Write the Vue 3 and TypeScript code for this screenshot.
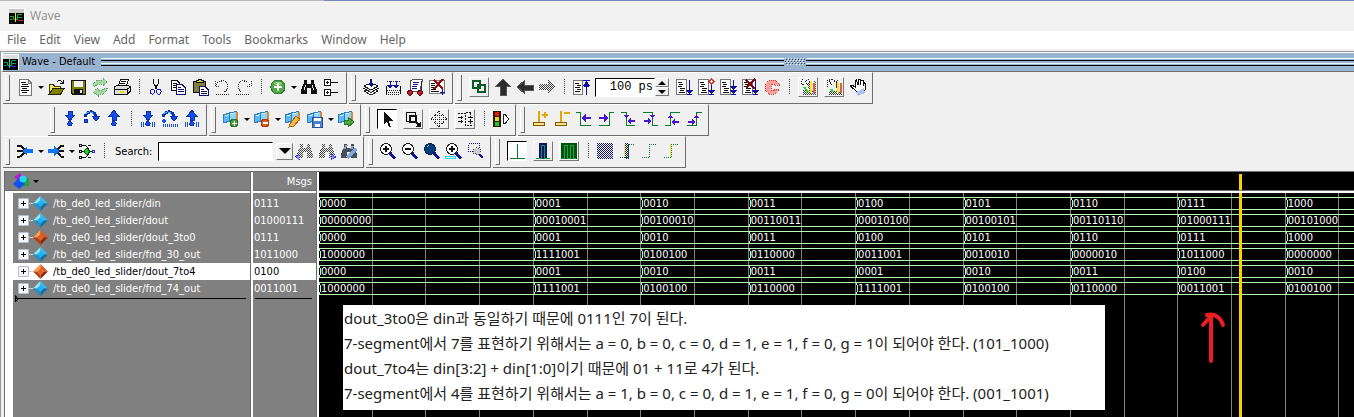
<script setup lang="ts">
import { ref } from 'vue'

type Layer = { d: string; f?: string; s?: string; w?: number; dash?: string }
type Item = { icon?: string; label?: string; kind?: 'plain' | 'raised' | 'pressed' | 'drop' | 'sep' | 'search' | 'time' }

const NAVY = '#10109a'
const GREEN = '#0a7a2c'
const BLUE = '#1450e6'
const VIOLET = '#4b12d0'

const sheet: Layer[] = [
  { d: 'M2.5 2.5H12.5V17.5H2.5Z', f: '#fff', s: '#777' },
  { d: 'M4 5.5H8M5 7.5H9M4 9.5H8M6 11.5H11M6 13.5H10M5 15.5H11', s: '#111' },
]
const flags: Layer[] = [
  { d: 'M2 6L9 4V12L2 14Z', f: '#5db9f3', s: '#2d7fc0' },
  { d: 'M8 4L15 2.5V10L9 12Z', f: '#8bd6ff', s: '#2d7fc0' },
  { d: 'M4 7L8 5.5M10 5L13 4', s: '#e3f7ff', w: 1 },
  { d: 'M16 3V12', s: '#d8853b', w: 2 },
]
const lens: Layer[] = [
  { d: 'M12 12L17 17.5', s: NAVY, w: 3 },
  { d: 'M8 2.5A5.5 5.5 0 1 1 7.9 2.5Z', f: '#fff', s: '#222', w: 1 },
]
const down: Layer = { d: 'M8 2H12V6H15L10 11.5L5 6H8Z', f: BLUE, s: '#0b2fb5' }
const up: Layer = { d: 'M10 1.5L15 7H12V11H8V7H5Z', f: BLUE, s: '#0b2fb5' }
const over: Layer[] = [
  { d: 'M3 8C4 3 10 1 13 5L14.5 8', s: '#0b2fb5', w: 3 },
  { d: 'M10 7H18L14 12Z', f: BLUE, s: '#0b2fb5' },
  { d: 'M3.5 5C6 2 10 2 12 6', s: '#58a6ff' },
]
const ticks: Layer = { d: 'M3.5 13V18M5.5 13V18M14.5 13V18M16.5 13V18', s: BLUE }
const dot: Layer = { d: 'M10 12.5A2.2 2.2 0 1 1 9.9 12.5Z', f: BLUE, s: '#0b2fb5' }
const binoc = 'M5 3H8V7H12V3H15V6L18 13V17H12V11H8V17H2V13L5 6Z'

const icons: Record<string, Layer[]> = {
  doc: [{ d: 'M4.5 2.5H13L16.5 6V18.5H4.5Z', f: '#fff', s: '#777' }, { d: 'M13 2V6H17', s: '#777' }, { d: 'M6 5.5H11M7 7.5H13M6 9.5H14M7 11.5H12M6 13.5H14M7 15.5H12', s: '#111' }],
  open: [{ d: 'M3.5 16V7.5H7L8.5 9H14.5V12', f: '#ffe56b', s: '#3d3d00' }, { d: 'M3 17.5L7 11.5H18L14.5 17.5Z', f: '#808000', s: '#222200' }, { d: 'M11 5C13 2 15 3 17 6M17 3V6.5H14', s: '#111' }],
  save: [{ d: 'M3.5 3.5H17.5V17.5H5L3.5 16Z', f: '#808000', s: '#111' }, { d: 'M6 4H15V10H6Z', f: '#f0f0f0' }, { d: 'M6 12H15V17H6Z', f: '#111' }, { d: 'M12 13H14V16H12Z', f: '#eee' }],
  refresh: [{ d: 'M3 9V7L7 3H13V1L17 5L13 9V7H8L5 9Z', f: '#a4d6a6', s: '#5fa866', dash: '1 1' }, { d: 'M17 11V13L13 17H8V19L3 15L8 11V13H12L15 11Z', f: '#a4d6a6', s: '#5fa866', dash: '1 1' }],
  print: [{ d: 'M6.5 9L8.5 2.5H16.5L14.5 9Z', f: '#fff', s: '#111' }, { d: 'M9 4.5H14M8 6.5H13', s: '#111' }, { d: 'M2.5 10L5 8.5H16L18.5 10V14L15 17.5H2.5Z', f: '#ddd', s: '#111' }, { d: 'M3 12.5H15L18 10M15 13V17', s: '#111' }, { d: 'M8 14H12V16H8Z', f: '#e5dc00' }],
  cut: [{ d: 'M7.5 2V6L11 12M12.5 2V6L9 12', s: '#111' }, { d: 'M6.5 12A2.2 2.6 0 1 1 6.4 12ZM13 12A2.2 2.6 0 1 1 12.9 12Z', s: '#1717d8', w: 1 }],
  copy: [{ d: 'M3.5 3.5H9L11.5 6V13.5H3.5Z', f: '#fff', s: '#111' }, { d: 'M5 6.5H9M5 8.5H10M5 10.5H8', s: '#111' }, { d: 'M8.5 7.5H14L17.5 11V17.5H8.5Z', f: '#fff', s: '#10106e' }, { d: 'M10 10.5H13M10 12.5H16M10 14.5H16', s: '#10106e' }],
  paste: [{ d: 'M3.5 4.5H15.5V15.5H3.5Z', f: '#80803c', s: '#111' }, { d: 'M6.5 5.5V3.5H8L9 2H11L12 3.5H13V5.5Z', f: '#d8d05a', s: '#111' }, { d: 'M9.5 9.5H15L18.5 13V18.5H9.5Z', f: '#fff', s: '#10106e' }, { d: 'M11 12.5H14M11 14.5H17M11 16.5H17', s: '#10106e' }],
  undo: [{ d: 'M3 4V9H8M4 8C8 2 15 3 16 8C16 12 14 14 12 15M4 17.5H18', s: '#333', dash: '1 1' }],
  redo: [{ d: 'M17 4V9H12M16 8C12 2 5 3 4 8C4 12 6 14 8 15M2 17.5H16', s: '#333', dash: '1 1' }],
  add: [{ d: 'M10 3A7 7 0 1 1 9.9 3Z', f: '#54a64a', s: '#2f7f2d' }, { d: 'M6 6A6 6 0 0 1 14 6L13 8H7Z', f: '#92cf82' }, { d: 'M10 6V14M6 10H14', s: '#fff', w: 2 }],
  find: [{ d: binoc, f: '#111' }, { d: 'M6.5 8L5.5 13M13.5 8L14.5 13', s: '#ddd' }],
  tree: [{ d: 'M3.5 2.5H9.5V8.5H3.5ZM3.5 12.5H9.5V18.5H3.5Z', f: '#fff', s: '#111' }, { d: 'M6.5 4V7M5 5.5H8M6.5 14V17M5 15.5H8M10 5.5H17M10 15.5H17', s: '#111' }],
  compile: [{ d: 'M3 14L10 11L17 14L10 18Z', f: '#fff', s: '#222' }, { d: 'M3 11.5L10 9L17 11.5L10 15.5Z', f: '#ddd', s: '#222' }, { d: 'M3 9L10 6L17 9L10 13Z', f: '#fff', s: '#222' }, { d: 'M10 2V8', s: NAVY, w: 2 }, { d: 'M7 7H13L10 10Z', f: NAVY }],
  compileAll: [{ d: 'M3 9V17M17 9V17', s: '#111' }, { d: 'M4 4.5H17M4 13.5H17M5 15.5H17M3 17.5H17', s: '#222', dash: '1 1' }, { d: 'M7 4V9M13 4V9', s: NAVY, w: 1 }, { d: 'M4 8H10L7 12ZM10 8H16L13 12Z', f: NAVY }],
  simulate: [{ d: 'M5.5 4L8 2.5H17.5L15 14H5Z', f: '#fff', s: '#555' }, { d: 'M8 5.5H14M8 7.5H13M7 9.5H12M7 11.5H12', s: NAVY }, { d: 'M16 4C19 10 15 13 16 17', s: '#222' }, { d: 'M4 13H6L8 15L6 18H4L2 16ZM14 13H16L18 15L16 18H14L12 16Z', f: '#c91a2c', s: '#5e0712' }],
  stopSim: [{ d: 'M2.5 3.5H17.5V16.5H2.5Z', f: '#fff', s: '#777' }, { d: 'M4 6.5H8M4 8.5H8M4 10.5H9M4 12.5H9M4 14.5H12', s: '#111' }, { d: 'M7 3L16 12M16 2L7 12', s: '#8b0d0d', w: 2 }, { d: 'M15.5 12V18M13 15.5H18', s: NAVY }],
  chain: [{ d: 'M4 4H11V11H4ZM9 8H16V15H9Z', s: '#0b5a28', w: 2 }],
  upBlack: [{ d: 'M10 2L17 9H13V18H7V9H3Z', f: '#2b2b2b', s: '#555' }],
  leftBlack: [{ d: 'M2 10L9 4V8H18V13H9V16Z', f: '#2b2b2b', s: '#555' }],
  rightGray: [{ d: 'M2 7H11V3L18 10L11 16V13H2Z', f: 'url(#dither-black)' }],
  restart: [{ d: 'M2.5 3.5H11.5V17.5H2.5Z', f: '#fff', s: '#777' }, { d: 'M4 6.5H8M6 8.5H10M4 10.5H9M6 12.5H10M4 14.5H9', s: '#111' }, { d: 'M12 3.5H19M13 9.5H18M15.5 4V18', s: NAVY }, { d: 'M12 9L15.5 4L19 9Z', f: NAVY }],
  run: [...sheet, { d: 'M15.5 3V15M13 17.5H18', s: NAVY }, { d: 'M12 13H19L15.5 17Z', f: NAVY }],
  runAll: [...sheet, { d: 'M15.5 7V15M13 17.5H18', s: NAVY }, { d: 'M12 13H19L15.5 17Z', f: NAVY }, { d: 'M15.5 2L18 4.5L15.5 7L13 4.5Z', f: '#fff', s: '#e02a20' }],
  runNext: [...sheet, { d: 'M15.5 3V15M13 17.5H18', s: NAVY }, { d: 'M12 9H19L15.5 13ZM12 13H19L15.5 17Z', f: NAVY }],
  breakSim: [...sheet, { d: 'M15.5 3V15M13 17.5H18', s: NAVY }, { d: 'M12 13H19L15.5 17Z', f: NAVY }, { d: 'M6 3L15 12M15 2L6 11', s: '#7b0c0c', w: 2 }],
  stop: [{ d: 'M7 3H13L17 7V8H12V7H9V13H12V12H17V13L13 17H7L3 13V7Z', f: '#f3a39c', s: '#e0392e', dash: '1 1' }],
  profile: [{ d: 'M3 5C3 2 7 2 8 5C9 2 12 2 12 6M3 6L6 8M8 6L11 9', s: '#222', dash: '1 1' }, { d: 'M5 13H18V18H5ZM10 5H13V12H10ZM16 4H18V12H16Z', f: 'url(#dither-black)' }, { d: 'M6 10L10 15', s: '#29d92e', w: 2 }, { d: 'M12 5H14V16H12Z', f: '#f5e71a' }, { d: 'M15 6H17V16H15Z', f: '#ee5348' }],
  memory: [{ d: 'M3 10V4L8 2L12 5V10M5 4L9 9', s: '#222', dash: '1 1' }, { d: 'M5 14H18V18H5ZM12 3H14V12H12Z', f: 'url(#dither-black)' }, { d: 'M7 12L9 15', s: '#29d92e', w: 2 }, { d: 'M13 5H15V16H13Z', f: '#f5e71a' }, { d: 'M16 6H18V16H16Z', f: '#ee5348' }],
  hand: [{ d: 'M8 14L2.5 9L4 8L7 10V4L8.5 3L10 8V2.5H12V8L13 3H15V9L16.5 6L17.5 7V12L15 16H9Z', f: '#fff', s: '#111' }, { d: 'M8 15L16 11L17 16L10 19Z', f: '#aac3ee' }],
  into: [down, dot], over: [...over, { d: 'M4 10A2 2 0 1 1 3.9 10Z', f: BLUE, s: '#0b2fb5' }], out: [up, dot],
  intoC: [down, dot, ticks], overC: [...over, { d: 'M4 10A2 2 0 1 1 3.9 10Z', f: BLUE }, { d: 'M3 16.5H18', s: BLUE, w: 3, dash: '1 1' }], outC: [up, dot, ticks],
  flagAdd: [...flags, { d: 'M13 10A4 4 0 1 1 12.9 10Z', f: '#4c9e3c', s: '#2d6f24' }, { d: 'M13 11.5V16.5M10.5 14H15.5', s: '#fff' }],
  flagDel: [...flags, { d: 'M13 10A4 4 0 1 1 12.9 10Z', f: '#e4561a', s: '#a83b0c' }, { d: 'M10.5 14H15.5', s: '#fff', w: 2 }],
  flagEdit: [...flags, { d: 'M7 15L13 7L17 10L11 17L6 18Z', f: '#f4b847', s: '#a8640f' }],
  flagSave: [...flags, { d: 'M7.5 8.5H17.5V18.5H7.5Z', f: '#4b7fcf', s: '#264e97' }, { d: 'M9 9H16V12H9ZM10 15H15V18H10Z', f: '#fff' }],
  flagGo: [...flags, { d: 'M8 11H12V8L18 13L12 18V15H8Z', f: '#51a844', s: '#2b7427' }],
  cursor: [{ d: 'M7 3V15L10 12.5L12 18H14L12 12H16Z', f: '#111' }],
  zoomMode: [{ d: 'M3.5 3.5H12.5V12.5H3.5Z', s: '#111', w: 1 }, { d: 'M7 7H13V13H7ZM13 13L18 18', s: '#111', w: 2 }, { d: 'M18 12V18H12Z', f: '#111' }],
  pan: [{ d: 'M10 2V18M2 10H18M10 2L6 6H14ZM10 18L6 14H14ZM2 10L6 6V14ZM18 10L14 6V14Z', s: '#222', dash: '1 1' }],
  edit: [{ d: 'M3 4.5H10.5V16.5H17M10.5 3.5H17M15.5 4V16', s: '#111', dash: '2 1' }, { d: 'M3 8.5H8M3 12.5H8M13 8.5H18M13 12.5H18M6.5 7V10M6.5 11V14', s: '#111' }],
  traffic: [{ d: 'M2 2H10V18H2Z', f: '#2b1a00' }, { d: 'M4 3H8V7H4Z', f: '#f01414' }, { d: 'M4 8H8V12H4Z', f: '#e5d822' }, { d: 'M4 13H8V17H4Z', f: '#18c72c' }, { d: 'M12.5 5.5H14L18 10L14 14.5H12.5Z', f: '#fff', s: '#222' }],
  cursAdd: [{ d: 'M9 2V13M12 6H18M15 3V9', s: '#e0a800', w: 2 }, { d: 'M3.5 13.5H14.5V16.5H3.5Z', f: '#ffe08a', s: '#7a5900' }],
  cursDel: [{ d: 'M9 2V13M12 4H18', s: '#e0a800', w: 2 }, { d: 'M3.5 13.5H14.5V16.5H3.5Z', f: '#ffe08a', s: '#7a5900' }],
  prevT: [{ d: 'M2 3.5H6.5V16.5H17', s: GREEN }, { d: 'M7 9L12 5V8H17V10H12V13Z', f: VIOLET }],
  nextT: [{ d: 'M3 16.5H13.5V3.5H18', s: GREEN }, { d: 'M13 9L8 5V8H3V10H8V13Z', f: VIOLET }],
  prevF: [{ d: 'M3 3.5H8.5V16.5H17', s: GREEN }, { d: 'M6 6H11L8.5 10ZM9 12L13 9V11H17V13H13V15Z', f: VIOLET }],
  nextF: [{ d: 'M3 3.5H12.5V16.5H18', s: GREEN }, { d: 'M10 6H15L12.5 10ZM12 12L8 9V11H4V13H8V15Z', f: VIOLET }],
  prevR: [{ d: 'M3 16.5H8.5V3.5H18', s: GREEN }, { d: 'M6 9H11L8.5 5ZM9 13L13 10V12H17V14H13V16Z', f: VIOLET }],
  nextR: [{ d: 'M3 16.5H12.5V3.5H18', s: GREEN }, { d: 'M10 9H15L12.5 5ZM12 13L8 10V12H4V14H8V16Z', f: VIOLET }],
  fanIn: [{ d: 'M2 4.5H5L9 8V12L5 15.5H2M2 10H8', s: '#111', w: 2 }, { d: 'M7 10L12 5V8H18V12H12V15Z', f: '#1273ee' }],
  fanOut: [{ d: 'M18 4.5H15L12 8V12L15 15.5H18M12 10H18', s: '#111', w: 2 }, { d: 'M13 10L8 5V8H2V12H8V15Z', f: '#1273ee' }],
  net: [{ d: 'M4 4.5H8.5L11.5 8V13L8.5 16.5H4M11 4.5H14M11 16.5H14M4 10.5H16', s: '#111' }, { d: 'M2.5 3.5H4.5V5.5H2.5ZM2.5 9.5H4.5V11.5H2.5ZM2.5 15.5H4.5V17.5H2.5Z', f: '#fff', s: '#111' }, { d: 'M10 7L13 10.5L10 14L7 10.5Z', f: '#28c72b', s: '#0b5410' }, { d: 'M15.5 9.5H17.5V11.5H15.5Z', f: '#fff', s: '#1430e0' }],
  findPrev: [{ d: binoc, f: 'url(#dither-black)' }, { d: 'M0 16L4 13V19Z', f: '#8d8df5', s: '#2525f0', dash: '1 1' }],
  findNext: [{ d: binoc, f: 'url(#dither-black)' }, { d: 'M19 16L14 13V19Z', f: '#8d8df5', s: '#2525f0', dash: '1 1' }],
  findOpt: [{ d: binoc, f: '#45505c' }, { d: 'M5 8L8 4M12 8L14 5', s: '#8ea2b6', w: 2 }, { d: 'M8 17L14 11L17 8', s: '#7fa7dd', w: 3 }],
  zin: [...lens, { d: 'M8 5V11M5 8H11', s: '#111', w: 2 }],
  zout: [...lens, { d: 'M5 8H11', s: '#111', w: 2 }],
  zfull: [lens[0], { d: 'M8 2.5A5.5 5.5 0 1 1 7.9 2.5Z', f: '#063c78', s: '#0a2550' }, { d: 'M5 6L7 4', s: '#8cc4ec' }],
  zcur: [...lens, { d: 'M8 5V11M5 8H11', s: '#111', w: 2 }, { d: 'M1.5 15.5H11.5V17.5H1.5Z', s: '#28d9ec' }],
  zlast: [{ d: 'M2.5 2.5H13.5V10.5H2.5Z', s: NAVY, dash: '1 1' }, { d: 'M13 13L17 17', s: NAVY, w: 2 }, { d: 'M10 6L14 8V12L12 14L7 12V9Z', f: '#ccc', s: '#555', dash: '1 1' }],
  wave1: [{ d: 'M10.5 3V17M3 17.5H18', s: GREEN }],
  wave2: [{ d: 'M6 2H14V18H6Z', f: '#151570' }, { d: 'M3 17.5H8.5V4.5H11.5V17.5H17', s: '#15983c' }],
  wave3: [{ d: 'M2 2H18V18H2Z', f: '#00530c' }, { d: 'M3 17.5H5.5V4.5H8.5V17.5H11.5V4.5H14.5V17.5H17', s: '#20a44a' }],
  dim1: [{ d: 'M2 2H18V18H2Z', f: 'url(#dither-navy)' }],
  dim2: [{ d: 'M8 2H12V18H8Z', f: 'url(#dither-navy)' }, { d: 'M7.5 3V17', s: '#f1e632' }, { d: 'M3 16.5H11.5V3.5H17', s: GREEN, dash: '1 1' }],
  dim3: [{ d: 'M3 16.5H10.5V3.5H17', s: GREEN, dash: '1 1' }],
  dim4: [{ d: 'M9.5 3V17', s: '#f1e632' }, { d: 'M3 16.5H10.5V3.5H17', s: GREEN, dash: '1 1' }],
}

const b = (icon: string, label: string): Item => ({ kind: 'plain', icon, label })
const r = (icon: string, label: string): Item => ({ kind: 'raised', icon, label })
const p = (icon: string, label: string): Item => ({ kind: 'pressed', icon, label })
const drop = (label: string): Item => ({ kind: 'drop', label })
const sep: Item = { kind: 'sep' }

const toolbars: Item[][][] = [
  [
    [b('doc', 'New'), drop('New options'), b('open', 'Open'), b('save', 'Save'), b('refresh', 'Reload'), b('print', 'Print'), sep, b('cut', 'Cut'), b('copy', 'Copy'), b('paste', 'Paste'), b('undo', 'Undo'), b('redo', 'Redo'), sep, b('add', 'Add selected'), drop('Add options'), b('find', 'Find'), b('tree', 'Expand')],
    [b('compile', 'Compile'), b('compileAll', 'Compile all'), b('simulate', 'Simulate'), b('stopSim', 'End simulation')],
    [r('chain', 'Environment link'), b('upBlack', 'Up'), b('leftBlack', 'Back'), b('rightGray', 'Forward'), sep, b('restart', 'Restart'), { kind: 'time' }, b('run', 'Run'), b('runAll', 'Continue run'), b('runNext', 'Run all'), b('breakSim', 'Break'), b('stop', 'Stop'), sep, r('profile', 'Performance profiling'), r('memory', 'Memory profiling'), b('hand', 'Pan')],
  ],
  [
    [b('into', 'Step into'), b('over', 'Step over'), b('out', 'Step out'), sep, b('intoC', 'Step into current'), b('overC', 'Step over current'), b('outC', 'Step out current')],
    [b('flagAdd', 'Add bookmark'), drop('Add bookmark options'), b('flagDel', 'Delete bookmark'), drop('Delete bookmark options'), b('flagEdit', 'Edit bookmarks'), b('flagSave', 'Save bookmarks'), drop('Save bookmark options'), b('flagGo', 'Go to bookmark')],
    [p('cursor', 'Select mode'), r('zoomMode', 'Zoom mode'), r('pan', 'Pan mode'), r('edit', 'Edit mode'), sep, b('traffic', 'Stop drawing')],
    [b('cursAdd', 'Insert cursor'), b('cursDel', 'Delete cursor'), b('prevT', 'Previous transition'), b('nextT', 'Next transition'), b('prevF', 'Previous falling edge'), b('nextF', 'Next falling edge'), b('prevR', 'Previous rising edge'), b('nextR', 'Next rising edge')],
  ],
  [
    [b('fanIn', 'Drivers'), drop('Driver options'), b('fanOut', 'Readers'), drop('Reader options'), b('net', 'Show net'), sep, { kind: 'search' }, b('findPrev', 'Search backward'), b('findNext', 'Search forward'), b('findOpt', 'Search options')],
    [b('zin', 'Zoom in'), b('zout', 'Zoom out'), b('zfull', 'Zoom full'), b('zcur', 'Zoom on cursor'), b('zlast', 'Zoom other')],
    [p('wave1', 'Line style 1'), r('wave2', 'Line style 2'), r('wave3', 'Line style 3'), sep, b('dim1', 'Contribution 1'), b('dim2', 'Contribution 2'), b('dim3', 'Contribution 3'), b('dim4', 'Contribution 4')],
  ],
]

const menus = ['File', 'Edit', 'View', 'Add', 'Format', 'Tools', 'Bookmarks', 'Window', 'Help']
const search = ref('')
const runLength = ref('100 ps')
const selected = ref(4)

const signals = [
  { name: 'din', hot: false, now: '0111', values: ['0000', '0001', '0010', '0011', '0100', '0101', '0110', '0111', '1000'] },
  { name: 'dout', hot: false, now: '01000111', values: ['00000000', '00010001', '00100010', '00110011', '00010100', '00100101', '00110110', '01000111', '00101000'] },
  { name: 'dout_3to0', hot: true, now: '0111', values: ['0000', '0001', '0010', '0011', '0100', '0101', '0110', '0111', '1000'] },
  { name: 'fnd_30_out', hot: false, now: '1011000', values: ['1000000', '1111001', '0100100', '0110000', '0011001', '0010010', '0000010', '1011000', '0000000'] },
  { name: 'dout_7to4', hot: true, now: '0100', values: ['0000', '0001', '0010', '0011', '0001', '0010', '0011', '0100', '0010'] },
  { name: 'fnd_74_out', hot: false, now: '0011001', values: ['1000000', '1111001', '0100100', '0110000', '1111001', '0100100', '0110000', '0011001', '0100100'] },
]

const notes = [
  'dout_3to0은 din과 동일하기 때문에 0111인 7이 된다.',
  '7-segment에서 7를 표현하기 위해서는 a = 0, b = 0, c = 0, d = 1, e = 1, f = 0, g = 1이 되어야 한다. (101_1000)',
  'dout_7to4는 din[3:2] + din[1:0]이기 때문에 01 + 11로 4가 된다.',
  '7-segment에서 4를 표현하기 위해서는 a = 1, b = 0, c = 0, d = 1, e = 1, f = 0, g = 0이 되어야 한다. (001_1001)',
]
const dithers = [['black', '#444'], ['navy', '#151570']]
</script>

<template>
  <div class="window">
    <svg class="defs" aria-hidden="true">
      <pattern v-for="[id, color] in dithers" :id="'dither-' + id" :key="id" width="2" height="2" patternUnits="userSpaceOnUse">
        <path d="M0 0H1V1H0ZM1 1H2V2H1Z" :fill="color" />
      </pattern>
    </svg>

    <header class="title">
      <svg class="app-icon" viewBox="0 0 16 16"><path d="M0 0H16V16H0Z" fill="#fff" /><path d="M0 1H15V5H0Z" fill="#c8c8c8" /><path d="M0 5H15V16H0Z" fill="#000" /><path d="M1 8.5H4.5V11.5H8.5V6.5H13M1 11.5H3M9 9.5H13" stroke="#1fae2e" fill="none" /><path d="M6.5 5V14" stroke="#f3e61a" /><path d="M9 12.5H14" stroke="#d8223c" /></svg>
      <span>Wave</span>
    </header>
    <nav class="menu"><button v-for="m in menus" :key="m" type="button">{{ m }}</button></nav>

    <section class="pane">
      <div class="caption">
        <svg class="app-icon" viewBox="0 0 16 16"><path d="M0 0H16V16H0Z" fill="#fff" /><path d="M0 1H15V5H0Z" fill="#ddd" /><path d="M0 5H15V16H0Z" fill="#000" /><path d="M1 8.5H4.5V11.5H8.5V6.5H13M1 11.5H3M9 9.5H13" stroke="#16a05a" fill="none" /><path d="M6.5 5V14" stroke="#28d0d0" /><path d="M8 12.5H13" stroke="#3a22f0" /></svg>
        <h1>Wave - Default</h1>
        <span class="rails"></span>
        <svg class="grip" width="22" height="8" aria-hidden="true"><path d="M1 .5H21M1 4.5H21M3 2.5H21M3 6.5H21" stroke="#fff" stroke-dasharray="1 2" /><path d="M2 1.5H21M2 5.5H21M1 3.5H21" stroke="#33475c" stroke-dasharray="1 2" /></svg>
        <span class="rails"></span>
      </div>

      <div class="toolbars">
        <div v-for="(row, ri) in toolbars" :key="ri" class="bar-row" :class="{ indented: ri === 1 }">
          <div v-for="(group, gi) in row" :key="gi" class="group" role="toolbar">
            <template v-for="(it, ii) in group" :key="ii">
              <span v-if="it.kind === 'sep'" class="sep"></span>
              <button v-else-if="it.kind === 'drop'" class="drop" type="button" :aria-label="it.label"></button>
              <span v-else-if="it.kind === 'search'" class="search">
                <label for="search">Search:</label>
                <input id="search" v-model="search" type="text" />
                <button type="button" aria-label="Search history"></button>
              </span>
              <span v-else-if="it.kind === 'time'" class="time">
                <input v-model="runLength" type="text" aria-label="Run length" />
                <span class="spin"><button type="button" class="inc" aria-label="Increase"></button><button type="button" class="dec" aria-label="Decrease"></button></span>
              </span>
              <button v-else class="tool" :class="it.kind" type="button" :aria-label="it.label">
                <svg viewBox="0 0 20 20" shape-rendering="crispEdges">
                  <path v-for="(l, li) in icons[it.icon!]" :key="li" :d="l.d" :fill="l.f ?? 'none'" :stroke="l.s ?? 'none'" :stroke-width="l.w ?? 1" :stroke-dasharray="l.dash" />
                </svg>
              </button>
            </template>
          </div>
        </div>
      </div>

      <div class="view">
        <div class="names">
          <div class="head">
            <svg width="18" height="17" viewBox="0 0 18 17"><path d="M1 4L7 0L11 5L6 8Z" fill="#b51bd1" /><path d="M9 5H16V13H9Z" fill="#1aa540" /><path d="M6 5L12 11L6 16L0 11Z" fill="#1450f0" /><circle cx="10" cy="6" r="3.5" fill="#24d3f5" /></svg>
            <button class="drop" type="button" aria-label="Signal options"></button>
          </div>
          <div class="list">
            <div v-for="(s, i) in signals" :key="s.name" class="row" :class="{ selected: i === selected }" @click="selected = i">
              <button class="plus" type="button" :aria-label="'Expand ' + s.name"></button><i class="branch"></i>
              <svg class="gem" viewBox="0 0 14 14" :class="{ hot: s.hot }"><path class="a" d="M7 0L0 7H4L7 4Z" /><path class="b" d="M7 0L14 7H10L7 4Z" /><path class="c" d="M0 7L7 14V10L4 7Z" /><path class="d" d="M14 7L7 14V10L10 7Z" /><path class="e" d="M7 4L10 7L7 10L4 7Z" /></svg>
              <span>/tb_de0_led_slider/{{ s.name }}</span>
            </div>
            <div class="end"><svg class="tip" width="4" height="8" viewBox="0 0 4 8"><path d="M.5 .5V7L3 4Z" fill="none" stroke="#000" /></svg></div>
          </div>
        </div>
        <div class="values">
          <div class="head">Msgs</div>
          <div class="list">
            <div v-for="(s, i) in signals" :key="s.name" class="row" :class="{ selected: i === selected }">{{ s.now }}</div>
            <div class="end"></div>
          </div>
        </div>
        <div class="waves">
          <div class="head"></div>
          <div class="canvas">
            <div class="grid"><i v-for="n in 20" :key="n"></i></div>
            <div v-for="s in signals" :key="s.name" class="trace">
              <span v-for="(v, vi) in s.values" :key="vi" class="seg"><svg width="3" height="13" viewBox="0 0 3 13" shape-rendering="crispEdges"><path d="M.5 0V3M1.5 3V10M.5 10V13" stroke="#b4ffb4" /></svg>{{ v }}</span>
            </div>
            <div class="note"><p v-for="n in notes" :key="n">{{ n }}</p></div>
            <svg class="arrow" viewBox="0 0 28 54"><path d="M12 50V5M4 14L12 5M8 4C16 2 22 7 24 14" fill="none" stroke="#ed1c24" stroke-width="4" stroke-linecap="round" stroke-linejoin="round" /></svg>
          </div>
          <i class="marker"></i>
        </div>
      </div>
    </section>
  </div>
</template>

<style>
body { margin: 0; background: #f0f0f0; }
</style>

<style scoped>
* { box-sizing: border-box; }
button { padding: 0; border: 0; background: none; font: inherit; color: inherit; }
.window { min-height: 100vh; display: flex; flex-direction: column; font: 11px/17px "DejaVu Sans Condensed", "DejaVu Sans", sans-serif; color: #000; overflow: hidden; }
.defs { position: absolute; width: 0; height: 0; }
.title { height: 31px; flex: none; display: flex; align-items: center; gap: 5px; padding-left: 9px; background: #f2f2f2; border-top: 1px solid; border-image: linear-gradient(90deg, #b8b8b8 24%, #7b87bd 24%) 1; color: #8d8d8d; font: 12px/20px "Open Sans", "Noto Sans", sans-serif; }
.app-icon { width: 16px; height: 16px; flex: none; }
.menu { height: 20px; flex: none; display: flex; gap: 13px; padding-left: 7px; background: #fff; border-bottom: 2px solid #f0f0f0; color: #666; font: 12px/18px "Noto Sans", "Open Sans", sans-serif; }
.pane { flex: 1; display: flex; flex-direction: column; border-top: 1px solid #999; border-left: 1px solid #999; }
.caption { height: 20px; flex: none; display: flex; align-items: center; background: #99b4d1; border-top: 1px solid #fff; border-bottom: 1px solid #6d6d6d; border-left: 2px solid #fff; }
.caption h1 { margin: 0 6px 0 3px; font: 11px/18px "DejaVu Sans Condensed", "DejaVu Sans", sans-serif; }
.rails { flex: 686; height: 8px; background: linear-gradient(#e8ffff 1px, #99b4d1 1px 2px, #000 2px 3px, #99b4d1 3px 5px, #e8ffff 5px 6px, #99b4d1 6px 7px, #000 7px); }
.rails:last-child { flex: 550; }
.grip { flex: none; }
.toolbars { flex: none; padding: 0 0 3px 2px; background: #f0f0f0; }
.bar-row { display: flex; height: 32px; gap: 2px; }
.indented { padding-left: 45px; }
.group { display: flex; align-items: center; padding: 0 3px 2px 11px; border-right: 1px solid #6d6d6d; border-bottom: 1px solid #6d6d6d; border-top: 1px solid #fff; position: relative; }
.bar-row:first-child .group { padding-right: 4px; }
.bar-row:first-child .group:last-child { padding-right: 3px; }
.group::before { content: ""; position: absolute; left: 2px; top: 2px; bottom: 2px; width: 3px; border-left: 1px solid #fff; border-right: 1px solid #6d6d6d; border-bottom: 1px solid #6d6d6d; }
.tool { width: 22px; height: 22px; display: flex; align-items: center; justify-content: center; flex: none; }
.tool svg { width: 20px; height: 20px; flex: none; }
.raised, .pressed { width: 20px; height: 20px; margin: 0 3px; border: 1px solid; border-color: #fff #777 #777 #fff; }
.pressed { border-color: #000 #fff #fff #000; background: #fff; }
.drop { width: 9px; height: 14px; display: flex; align-items: center; justify-content: center; flex: none; }
.drop::after { content: ""; border: 3px solid transparent; border-top-color: #000; border-bottom: 0; }
.sep { width: 12px; height: 16px; display: flex; justify-content: center; flex: none; }
.sep::after { content: ""; width: 1px; background: repeating-linear-gradient(#444 0 1px, transparent 1px 2px); }
.search, .time { display: flex; align-items: center; flex: none; }
.search label { width: 38px; margin: 0 5px; }
.search input { width: 115px; height: 19px; border: 1px solid #fff; border-top-color: #000; border-left-color: #000; background: #fff; font: inherit; padding: 0 3px; outline: 0; }
.search button { width: 17px; height: 17px; margin: 0 1px 0 3px; display: flex; align-items: center; justify-content: center; border: 1px solid; border-color: #fff #777 #777 #fff; }
.search button::after { content: ""; border: 6px solid transparent; border-top-color: #000; border-bottom: 0; }
.time { margin: 0 4px 0 3px; }
.time input { width: 60px; height: 19px; border: 1px solid #fff; border-top-color: #000; border-left-color: #000; background: #fff; font: 12px/16px "Liberation Mono", monospace; text-align: right; padding: 0 1px; outline: 0; }
.spin { width: 14px; display: flex; flex-direction: column; }
.spin button { height: 9px; display: flex; align-items: center; justify-content: center; border: 1px solid; border-color: #fff #777 #777 #fff; }
.spin button::after { content: ""; border: 4px solid transparent; }
.spin .inc::after { border-bottom-color: #000; border-top: 0; }
.spin .dec::after { border-top-color: #000; border-bottom: 0; }
.view { flex: 1; display: grid; grid-template-columns: 246px 64px minmax(0, 1fr); gap: 2px; margin-left: 3px; border-top: 1px solid #6d6d6d; border-left: 1px solid #6d6d6d; background: #fff; }
.names, .values, .waves { display: flex; flex-direction: column; color: #fff; }
.names, .values { border-right: 1px solid #6d6d6d; }
.head { height: 19px; flex: none; display: flex; align-items: center; background: #808080; border-bottom: 1px solid #6d6d6d; }
.names .head { padding-left: 8px; }
.list { flex: 1; padding-top: 2px; margin-top: 2px; background: #808080; }
.names .list { margin-left: 8px; }
.row { height: 17px; display: flex; align-items: center; white-space: nowrap; }
.names .row { padding-left: 5px; }
.names .row > span { margin-left: 5px; }
.values .row { padding-left: 1px; }
.selected { background: #fff; color: #000; }
.plus { width: 11px; height: 11px; flex: none; border: 1px solid #b4bccf; border-radius: 1px; background: linear-gradient(#000, #000) center / 5px 1px no-repeat, linear-gradient(#000, #000) center / 1px 5px no-repeat, #f5f5fa; }
.branch { width: 4px; height: 1px; background: #d0d0d0; }
.gem { width: 15px; height: 15px; flex: none; }
.a { fill: #8be6ff; } .b { fill: #35bdf2; } .c { fill: #1b93cf; } .d { fill: #1470a5; } .e { fill: #19b5f5; }
.hot .a { fill: #ff9b52; } .hot .b { fill: #d65a20; } .hot .c { fill: #b84016; } .hot .d { fill: #8d2c0c; } .hot .e { fill: #e2601f; }
.end { height: 2px; margin: 0 4px 0 2px; border-bottom: 1px solid #000; position: relative; }
.tip { position: absolute; left: 0; top: -2px; }
.values .head { justify-content: flex-end; padding-right: 4px; }
.waves { position: relative; background: #fff; }
.waves .head { background: #000; }
.canvas { flex: 1; position: relative; margin-top: 2px; padding-top: 2px; background: #000; overflow: hidden; }
.grid { position: absolute; inset: 0; display: grid; grid-template-columns: repeat(19, 100fr) 27fr; }
.grid i { border-right: 1px solid #808080; }
.grid i:last-child { border: 0; }
.trace { position: relative; height: 17px; padding: 2px 0; display: grid; grid-template-columns: 400fr repeat(7, 200fr) 127fr; }
.seg { display: flex; min-width: 0; height: 13px; line-height: 13px; box-shadow: inset 0 1px #b4ffb4, inset 0 -1px #b4ffb4; }
.seg svg { flex: none; margin-right: -1px; }
.marker { position: absolute; left: 88.9%; top: 2px; bottom: 0; width: 3px; background: linear-gradient(#ffd000 16px, #808080 16px 17px, #fff 17px 19px, #ffd000 19px); }
.note { position: absolute; left: 24px; top: 112px; width: 762px; height: 105px; padding: 1px; background: #fff; color: #222; font: 15px/25px "Noto Sans", "Noto Sans CJK KR", sans-serif; white-space: nowrap; }
.note p { margin: 0; }
.arrow { position: absolute; left: 85%; top: 118px; width: 28px; height: 54px; }
</style>
